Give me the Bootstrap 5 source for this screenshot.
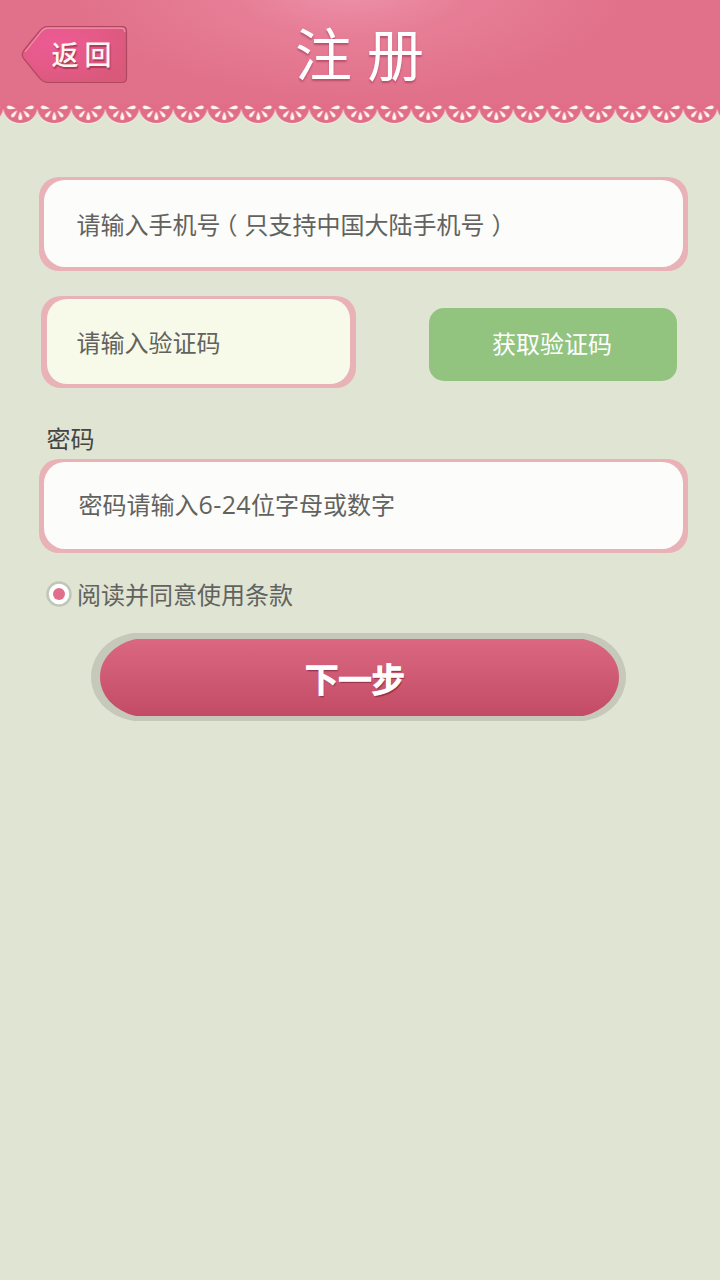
<!DOCTYPE html>
<html lang="zh-CN">
<head>
<meta charset="utf-8">
<meta name="viewport" content="width=device-width, initial-scale=1">
<title>注册</title>
<link href="https://cdn.jsdelivr.net/npm/bootstrap@5.3.0/dist/css/bootstrap.min.css" rel="stylesheet">
<style>
  body { background: #e0e4d3; font-family: "Noto Sans CJK SC", sans-serif; font-size: 24px; line-height: 36px; color: #62625e; overflow: hidden; font-weight: 400; }
  .topbar { height: 104px; background: radial-gradient(ellipse 290px 115px at 350px -12px, #ed92aa 0%, rgba(233,132,156,.7) 40%, rgba(226,113,139,0) 100%), #e1708a; }
  .lace { height: 22px; display: block; margin-bottom: 51px; }
  .back { width: 107px; height: 59px; margin: 25px 0 0 21px; }
  .back span { left: 30.5px; top: 9px; font-size: 27px; line-height: 40px; font-weight: 500; letter-spacing: 6px; color: #fff6f0; text-shadow: 1px 2px 1px rgba(130,30,60,.55); white-space: nowrap; }
  .heading { font-size: 57px; line-height: 80px; font-weight: 400; letter-spacing: 15px; color: #fff; margin: 11px 0 0 167px; text-shadow: 0 2px 2px rgba(150,50,80,.55); }
  .field { background: #e9b2b6; border-radius: 20px; padding: 3px 5px 4px; }
  .field > div { background: #fcfcfa; border-radius: 21px; height: 100%; }
  .field-wide { width: 649px; height: 94px; margin-left: 38.500px; }
  .field-code { width: 315px; height: 92px; margin-left: 40.500px; padding: 3px 6px 4px; }
  .field-code > div { background: #f7fae8; border-radius: 20px; }
  .btn-code { width: 248px; height: 73px; margin: 12px 43.500px 0 0; border-radius: 15px; background: #93c47f; color: #fff; font-size: 24px; font-weight: 400; padding: 0 1px 3px 0; }
  .paren { font-feature-settings: "halt"; }
  .paren-l { margin: 0 7px 0 5px; }
  .paren-r { margin-left: 7px; }
  .digits { font-family: "Open Sans", sans-serif; font-weight: 400; font-size: 25px; letter-spacing: .4px; line-height: 1; }
  .next { width: 535px; height: 88px; margin: 21px 0 0 91px; }
  .next span { font-size: 33.500px; line-height: 44px; font-weight: 500; color: #fff; -webkit-text-stroke: 1.400px #fff; text-shadow: 1px 2px 1px rgba(120,30,50,.65); left: 214px; top: 23px; letter-spacing: -.3px; }
</style>
</head>
<body>
<header>
  <div class="topbar d-flex align-items-start">
    <a class="back position-relative d-block text-decoration-none flex-shrink-0" href="#">
      <svg class="d-block" width="107" height="59" viewBox="0 0 107 59">
        <defs>
          <radialGradient id="backFill" cx=".32" cy=".3" r=".75">
            <stop offset="0" stop-color="#ec5b94"/><stop offset=".55" stop-color="#e55a88"/><stop offset="1" stop-color="#d9597b"/>
          </radialGradient>
        </defs>
        <path d="M27 1.500H101Q105.500 1.500 105.500 6V53Q105.500 57.500 101 57.500H27Q22 57.500 18.500 53L3 34Q-.5 29.500 3 25L18.500 6Q22 1.500 27 1.500Z" fill="url(#backFill)" stroke="#b0475f" stroke-width="1.200"/>
        <path d="M4 27L20 7Q23 3.200 27 3.200H100Q103.800 3.200 103.800 7" fill="none" stroke="#f193aa" stroke-width="1.200"/>
      </svg>
      <span class="position-absolute">返回</span>
    </a>
    <h1 class="heading">注册</h1>
  </div>
  <svg class="lace" width="720" height="22">
    <defs>
      <pattern id="scallop" x="3.300" y="0" width="34" height="22" patternUnits="userSpaceOnUse">
        <path d="M0 0H34V5C33 14 26 20 17 20S1 14 0 5Z" fill="#f4f0e5"/>
        <path d="M0 0H34V4.500C33 13 26 19 17 19S1 13 0 4.500Z" fill="#e16d88"/>
        <g fill="#fff5ec">
          <path d="M17 7.500C15.500 11 15 12.500 15 14Q15 16.200 17 16.200T19 14C19 12.500 18.500 11 17 7.500Z"/>
          <path d="M14 6.500C10.800 8 8.900 9.300 8.100 10.700Q7.200 12.500 8.600 13.300Q10.100 13.900 11.200 12.300C12.300 10.600 13.200 8.800 14 6.500Z"/>
          <path d="M20 6.500C23.200 8 25.100 9.300 25.900 10.700Q26.800 12.500 25.400 13.300Q23.900 13.900 22.800 12.300C21.700 10.600 20.800 8.800 20 6.500Z"/>
          <path d="M12.500 4.500C9.500 2.400 7.300 1.400 5.400 1.400Q3.400 1.500 3.500 3.400Q3.900 5.200 6 5.200C8.300 5.300 10.200 5 12.500 4.500Z"/>
          <path d="M21.500 4.500C24.500 2.400 26.700 1.400 28.600 1.400Q30.600 1.500 30.500 3.400Q30.100 5.200 28 5.200C25.700 5.300 23.800 5 21.500 4.500Z"/>
        </g>
      </pattern>
    </defs>
    <rect width="720" height="22" fill="url(#scallop)"/>
  </svg>
</header>
<main>
  <div class="field field-wide"><div class="d-flex align-items-center" style="padding-left:33px"><span>请输入手机号<span class="paren paren-l">（</span>只支持中国大陆手机号<span class="paren paren-r">）</span></span></div></div>
  <div class="d-flex justify-content-between align-items-start" style="margin-top:25px">
    <div class="field field-code"><div class="d-flex align-items-center" style="padding-left:30px">请输入验证码</div></div>
    <button class="btn btn-code border-0" type="button">获取验证码</button>
  </div>
  <div style="margin:32px 0 0 46.500px;color:#444;height:39px">密码</div>
  <div class="field field-wide"><div class="d-flex align-items-center" style="padding:0 0 3px 35px"><span>密码请输入<span class="digits">6-24</span>位字母或数字</span></div></div>
  <div class="d-flex align-items-center" style="margin:23px 0 0 46px">
    <svg width="26" height="26" viewBox="0 0 26 26"><circle cx="13" cy="13" r="11.500" fill="#fff" stroke="#c0c6b8" stroke-width="2.500"/><circle cx="13" cy="13" r="6" fill="#e0708a"/></svg>
    <span style="margin-left:5px">阅读并同意使用条款</span>
  </div>
  <a class="next d-block position-relative text-decoration-none" href="#">
    <svg class="d-block" width="535" height="88" viewBox="0 0 535 88">
      <defs><linearGradient id="nextFill" x2="0" y2="1"><stop offset="0" stop-color="#da6880"/><stop offset="1" stop-color="#c34b66"/></linearGradient></defs>
      <path d="M43 0H492C518 3 535 23 535 44S518 85 492 88H43C17 84 0 65 0 44S17 3 43 0Z" fill="#c6c8b9"/>
      <path d="M45 6H492C514 11 528 26 528 44S514 78 492 83H45C23 78 9 62 9 44S23 11 45 6Z" fill="url(#nextFill)"/>
    </svg>
    <span class="position-absolute">下一步</span>
  </a>
</main>
<script src="https://cdn.jsdelivr.net/npm/bootstrap@5.3.0/dist/js/bootstrap.bundle.min.js"></script>
</body>
</html>
